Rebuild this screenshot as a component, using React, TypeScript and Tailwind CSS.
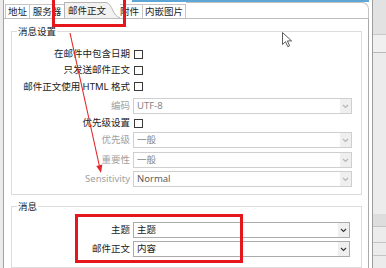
import React from 'react';

const Chevron: React.FC<{ dark?: boolean }> = ({ dark }) => (
  <svg width="7" height="5" viewBox="0 0 7 5" fill="none">
    <path d="M1 1l2.5 2.5L6 1" stroke={dark ? '#3a3a3a' : '#b6b6b6'} strokeWidth="1.2" />
  </svg>
);

const Combo: React.FC<{ value: string; disabled?: boolean; className?: string }> = ({
  value,
  disabled,
  className = '',
}) => (
  <div
    className={`flex h-[16px] items-center border bg-white ${
      disabled ? 'border-[#cfcfcf] text-[#858585]' : 'border-[#ababab] text-[#1b1b1b]'
    } ${className}`}
  >
    <span className="flex-1 pl-[3px]">{value}</span>
    <span className="flex h-full w-[11px] items-center justify-center bg-[#efefef]">
      <Chevron dark={!disabled} />
    </span>
  </div>
);

const Row: React.FC<{ label: string; muted?: boolean; className?: string; children: React.ReactNode }> = ({
  label,
  muted,
  className = '',
  children,
}) => (
  <div className={`flex items-center gap-[3px] ${className}`}>
    <span className={`w-[118px] text-right ${muted ? 'text-[#a0a0a0]' : ''}`}>{label}</span>
    {children}
  </div>
);

const Check: React.FC = () => <span className="ml-[1px] block h-[9px] w-[9px] border border-[#3a3a3a] bg-white" />;

const GroupBox: React.FC<{ title: string; className?: string; children: React.ReactNode }> = ({
  title,
  className = '',
  children,
}) => (
  <div className={`relative w-[351px] border border-[#dcdcdc] ${className}`}>
    <span className="absolute left-[5px] top-[-6px] bg-white px-[1px] leading-[11px]">{title}</span>
    {children}
  </div>
);

const App: React.FC = () => {
  return (
    <div className="relative flex h-[268px] w-[386px] overflow-hidden bg-white font-['Noto_Sans','Noto_Sans_CJK_SC',sans-serif] text-[9.5px] leading-none text-[#1b1b1b]">
      {/* left edge of the window behind */}
      <div className="w-[4px] shrink-0 border-r border-[#a3a3a3] bg-[#ebebeb]" />

      {/* dialog */}
      <div className="flex w-[365px] shrink-0 flex-col">
        <div className="h-[5px] pl-[128px]">
          <div className="h-[2px] border-b-2 border-r-2 border-[#5ea6d6]" />
        </div>

        {/* tabs */}
        <div className="flex h-[18px] items-end border-b border-[#bdbdbd]">
          <div className="w-[1px]" />
          <div className="flex h-[14px] w-[24px] items-center justify-center border-l border-t border-[#c6c6c6]">地址</div>
          <div className="flex h-[14px] w-[35px] items-center justify-center border-l border-t border-[#c6c6c6]">服务器</div>
          <div className="flex h-[16px] items-end">
            <div className="flex h-full items-center border-l border-t border-[#b5b5b5] bg-[#f2f2f2] pl-[3px]">
              邮件正文
            </div>
            <svg width="14" height="16" viewBox="0 0 14 16" className="block">
              <path d="M0 0.5C6 0.5 7 16 14 16H0Z" fill="#f2f2f2" />
              <path d="M0 0.5C6 0.5 7 15.5 14 15.5" stroke="#b5b5b5" fill="none" />
            </svg>
          </div>
          <div className="flex h-[14px] w-[22px] items-center border-t border-[#c6c6c6]">附件</div>
          <div className="flex h-[14px] w-[44px] items-center justify-center border-x border-t border-[#c6c6c6]">内嵌图片</div>
          <div className="h-full flex-1 rounded-tr-[7px] border-r border-t border-[#c2c2c2]" />
        </div>

        {/* panel */}
        <div className="flex flex-1 flex-col border-r border-[#a9a9a9] pl-[7px]">
          <GroupBox title="消息设置" className="mt-[12px] pb-[7px] pt-[14px]">
            <Row label="在邮件中包含日期" className="h-[16px]">
              <Check />
            </Row>
            <Row label="只发送邮件正文" className="h-[16px]">
              <Check />
            </Row>
            <Row label="邮件正文使用 HTML 格式" className="h-[17px]">
              <Check />
            </Row>
            <Row label="编码" muted className="mt-[3px]">
              <Combo value="UTF-8" disabled className="w-[219px]" />
            </Row>
            <Row label="优先级设置" className="mt-[1px] h-[16px]">
              <Check />
            </Row>
            <Row label="优先级" muted className="mt-[1px]">
              <Combo value="一般" disabled className="w-[219px]" />
            </Row>
            <Row label="重要性" muted className="mt-[4px]">
              <Combo value="一般" disabled className="w-[219px]" />
            </Row>
            <Row label="Sensitivity" muted className="mt-[3px]">
              <Combo value="Normal" disabled className="w-[219px] !text-[#5c5c5c]" />
            </Row>
          </GroupBox>

          <GroupBox title="消息" className="mt-[11px] pb-[10px] pt-[15px]">
            <Row label="主题">
              <Combo value="主题" className="w-[217px]" />
            </Row>
            <Row label="邮件正文" className="mt-[3px]">
              <Combo value="内容" className="w-[217px]" />
            </Row>
          </GroupBox>
        </div>
      </div>

      {/* window to the right */}
      <div className="flex flex-1">
        <div className="w-[3px] bg-white" />
        <div className="flex flex-1 flex-col border-l border-[#9d9d9d] bg-[#ececec]">
          <div className="h-[35px] border-b border-[#c9c9c9] bg-[#e2e2e2]" />
          <div className="h-[18px] border-b border-[#b9b9b9] bg-[#f0f0f0]" />
          <div className="h-[161px] bg-[#ececec]" />
          <div className="h-[13px] border-b border-[#c4c4c4] bg-[#dddddd]" />
          <div className="h-[16px] border-b border-[#c4c4c4]" />
          <div className="h-[13px] border-b border-[#c4c4c4]" />
        </div>
      </div>

      {/* annotations */}
      <div className="pointer-events-none absolute left-[52px] top-[-4px] h-[31px] w-[74px] border-[3px] border-[#e5161c]" />
      <div className="pointer-events-none absolute left-[75px] top-[214px] h-[49px] w-[168px] border-[3px] border-[#e5161c]" />
      <svg className="pointer-events-none absolute left-0 top-0" width="386" height="268" viewBox="0 0 386 268">
        <line x1="70" y1="33" x2="99.3" y2="165.5" stroke="#e3262a" strokeWidth="1.1" />
        <polygon points="101,173 102.3,164.6 96.3,165.9" fill="#e3262a" />
        <path
          d="M282.5 32.5v12l3-2.8 2.3 5 1.8-.8-2.2-5h4.2z"
          fill="#fff"
          stroke="#4a4a4a"
          strokeWidth="0.9"
          strokeLinejoin="round"
        />
      </svg>
    </div>
  );
};

export default App;
